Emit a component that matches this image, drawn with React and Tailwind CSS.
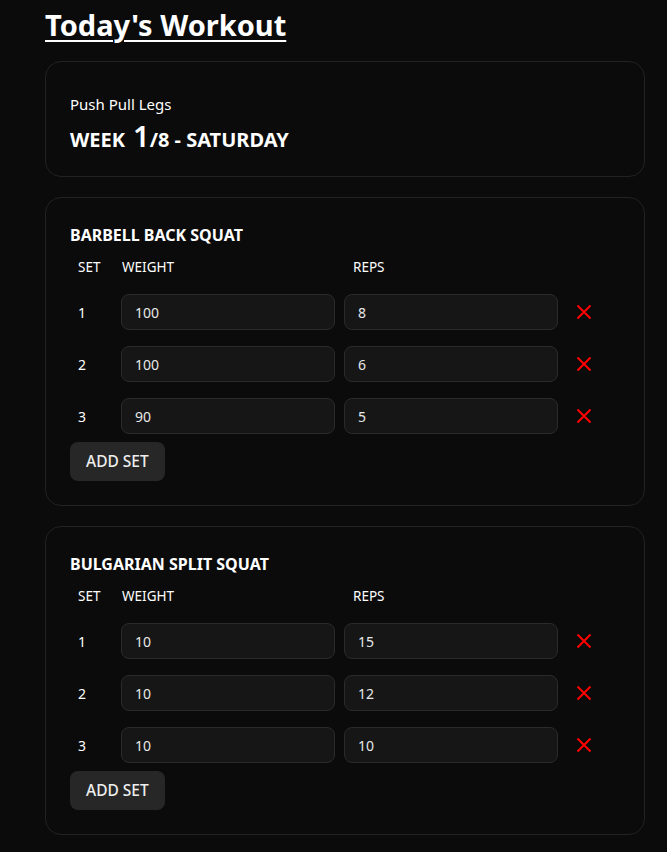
import React from "react";

const exercises = [
  { name: "BARBELL BACK SQUAT", sets: [["100", "8"], ["100", "6"], ["90", "5"]] },
  { name: "BULGARIAN SPLIT SQUAT", sets: [["10", "15"], ["10", "12"], ["10", "10"]] },
];

function XIcon() {
  return (
    <svg width="16" height="16" viewBox="0 0 16 16" fill="none">
      <path d="M1.5 1.5 L14.5 14.5 M14.5 1.5 L1.5 14.5" stroke="#ff0000" strokeWidth="2" strokeLinecap="butt" />
    </svg>
  );
}

function Exercise({ ex }) {
  return (
    <div className="rounded-2xl border border-[#222] bg-[#0b0b0b] px-6 pt-[26px] pb-6">
      <div className="text-[16px] font-bold text-white leading-[22px]">{ex.name}</div>
      <div className="mt-[11px] grid grid-cols-[42px_214px_214px_1fr] gap-x-[9px] items-center">
        <div className="pl-2 text-[13.5px] text-white leading-[20px]">SET</div>
        <div className="pl-px text-[13.5px] text-white leading-[20px]">WEIGHT</div>
        <div className="pl-[9px] text-[13.5px] text-white leading-[20px]">REPS</div>
        <div />
      </div>
      <div className="mt-[17px] flex flex-col gap-4">
        {ex.sets.map((s, i) => (
          <div key={i} className="grid grid-cols-[42px_214px_214px_1fr] gap-x-[9px] items-center">
            <div className="pl-2 text-[14px] text-white">{i + 1}</div>
            <div className="h-9 rounded-lg border border-[#2b2b2b] bg-[#161616] pl-[13px] flex items-center text-[14px] text-[#e8e8e8]">{s[0]}</div>
            <div className="h-9 rounded-lg border border-[#2b2b2b] bg-[#161616] pl-[13px] flex items-center text-[14px] text-[#e8e8e8]">{s[1]}</div>
            <div className="pl-[9px] flex items-center"><XIcon /></div>
          </div>
        ))}
      </div>
      <button className="mt-2 h-[39px] px-[16px] rounded-lg bg-[#272727] text-[15.5px] text-[#eee] font-medium">ADD SET</button>
    </div>
  );
}

export default function App() {
  return (
    <div className="min-h-[852px] bg-[#0b0b0b] pl-[45px] pb-6" style={{ fontFamily: '"Noto Sans", "Open Sans", sans-serif' }}>
      <div className="w-[600px]">
        <h1 className="pt-[3px] text-[29px] font-bold text-white underline underline-offset-[4px] decoration-2 leading-[44px]">Today's Workout</h1>
        <div className="mt-[14px] flex flex-col gap-5">
          <div className="rounded-2xl border border-[#222] bg-[#0b0b0b] px-6 pt-[31px] pb-[22px]">
            <div className="text-[15px] text-white leading-[22px]">Push Pull Legs</div>
            <div className="mt-[6px] flex items-baseline text-[20px] font-bold text-white leading-[29px]">
              <span>WEEK</span>
              <span className="ml-2 text-[29px] font-semibold">1</span>
              <span>/8 - SATURDAY</span>
            </div>
          </div>
          {exercises.map((ex) => (
            <Exercise key={ex.name} ex={ex} />
          ))}
        </div>
      </div>
    </div>
  );
}
